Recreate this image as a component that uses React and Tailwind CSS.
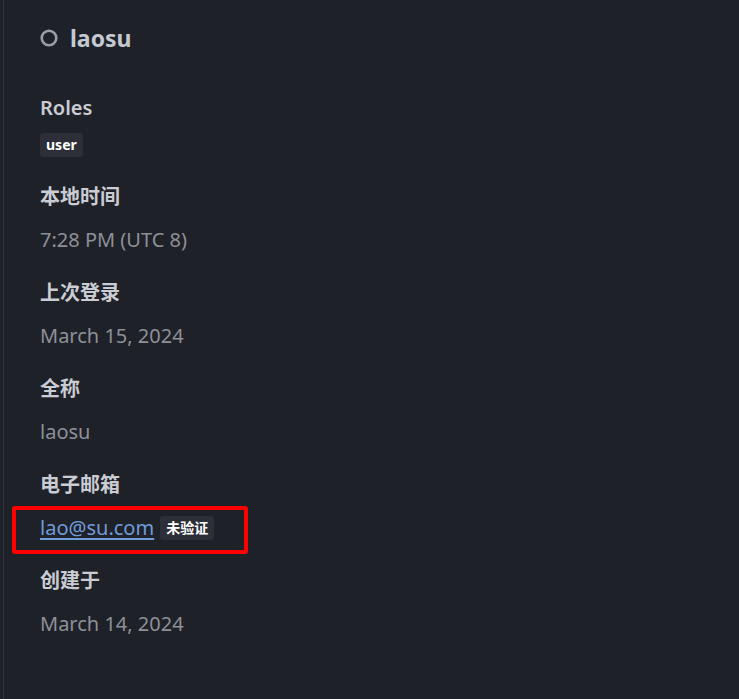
import React from 'react';

const Badge = ({ children }) => (
  <span className="inline-flex h-6 items-center rounded-[3px] bg-[#2c2f37] px-[6px] text-[14px] font-bold text-white">
    {children}
  </span>
);

const Field = ({ label, children, gap = 'mt-[19px]', after = 'mb-[29px]' }) => (
  <div className={`flex flex-col ${after}`}>
    <div className="h-6 text-[20px] font-semibold leading-6 text-[#c9ccd3]">{label}</div>
    <div className={`${gap} flex h-6 items-center text-[20px] leading-6 text-[#8d9098]`}>{children}</div>
  </div>
);

export default function App() {
  return (
    <div
      className="min-h-[699px] w-full bg-[#1f2129] pl-[3px]"
      style={{ fontFamily: '"Noto Sans", "Noto Sans CJK SC", sans-serif' }}
    >
      <div className="min-h-[699px] border-l border-[#30333b] pl-9 pt-[22px]">
        <div className="flex h-8 items-center gap-[12px]">
          <svg width="18" height="18" viewBox="0 0 18 18" className="shrink-0">
            <circle cx="9" cy="9" r="7.3" fill="none" stroke="#9a9ea6" strokeWidth="2.6" />
          </svg>
          <span className="text-[23px] font-bold text-[#c5c9d1]">laosu</span>
        </div>

        <div className="mt-[42px]">
          <Field label="Roles" gap="mt-[13px]" after="mb-[28px]">
            <Badge>user</Badge>
          </Field>
          <Field label="本地时间">7:28 PM (UTC 8)</Field>
          <Field label="上次登录">March 15, 2024</Field>
          <Field label="全称">laosu</Field>
          <Field label="电子邮箱">
            <div className="relative flex items-center gap-[6px]">
              <a href="#" className="text-[#6f9bd8] underline underline-offset-[3px]">lao@su.com</a>
              <Badge>未验证</Badge>
              <div className="pointer-events-none absolute left-[-28px] top-[-10px] h-12 w-[236px] rounded-[3px] border-4 border-[#ff0000]" />
            </div>
          </Field>
          <Field label="创建于">March 14, 2024</Field>
        </div>
      </div>
    </div>
  );
}
